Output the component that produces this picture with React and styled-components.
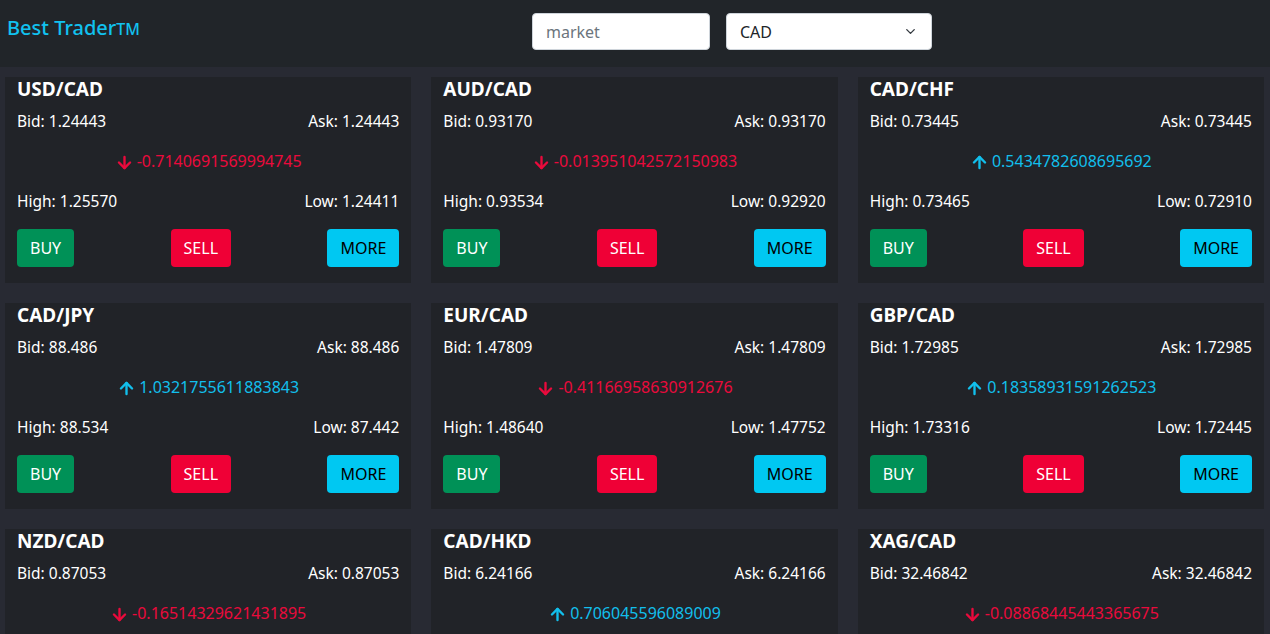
import React from "react";
import styled, { createGlobalStyle } from "styled-components";
import { ArrowDown, ArrowUp, ChevronDown } from "lucide-react";

const GlobalStyle = createGlobalStyle`
  html, body {
    margin: 0;
    padding: 0;
    background: #282a33;
    font-family: "Noto Sans", "Open Sans", sans-serif;
    color: #ffffff;
  }
  * { box-sizing: border-box; }
`;

const pairs = [
  { name: "USD/CAD", bid: "1.24443", ask: "1.24443", change: "-0.7140691569994745", high: "1.25570", low: "1.24411" },
  { name: "AUD/CAD", bid: "0.93170", ask: "0.93170", change: "-0.013951042572150983", high: "0.93534", low: "0.92920" },
  { name: "CAD/CHF", bid: "0.73445", ask: "0.73445", change: "0.5434782608695692", high: "0.73465", low: "0.72910" },
  { name: "CAD/JPY", bid: "88.486", ask: "88.486", change: "1.0321755611883843", high: "88.534", low: "87.442" },
  { name: "EUR/CAD", bid: "1.47809", ask: "1.47809", change: "-0.41166958630912676", high: "1.48640", low: "1.47752" },
  { name: "GBP/CAD", bid: "1.72985", ask: "1.72985", change: "0.18358931591262523", high: "1.73316", low: "1.72445" },
  { name: "NZD/CAD", bid: "0.87053", ask: "0.87053", change: "-0.16514329621431895", high: "0.87412", low: "0.86950" },
  { name: "CAD/HKD", bid: "6.24166", ask: "6.24166", change: "0.706045596089009", high: "6.24980", low: "6.19720" },
  { name: "XAG/CAD", bid: "32.46842", ask: "32.46842", change: "-0.08868445443365675", high: "32.91050", low: "32.40115" },
];

function App() {
  return (
    <>
      <GlobalStyle />
      <Header>
        <Logo>
          Best Trader<Tm>TM</Tm>
        </Logo>
        <SearchInput placeholder="market" />
        <SelectWrap>
          <Select defaultValue="CAD">
            <option>CAD</option>
            <option>USD</option>
            <option>EUR</option>
          </Select>
          <Chevron>
            <ChevronDown size={15} strokeWidth={2.2} />
          </Chevron>
        </SelectWrap>
      </Header>
      <Board>
        {pairs.map((p) => {
          const down = p.change.startsWith("-");
          return (
            <Card key={p.name}>
              <Title>{p.name}</Title>
              <Row>
                <span>Bid: {p.bid}</span>
                <span>Ask: {p.ask}</span>
              </Row>
              <Change $down={down}>
                {down ? <ArrowDown size={19} strokeWidth={3} /> : <ArrowUp size={19} strokeWidth={3} />}
                {p.change}
              </Change>
              <Row>
                <span>High: {p.high}</span>
                <span>Low: {p.low}</span>
              </Row>
              <Actions>
                <Button $kind="buy">BUY</Button>
                <Button $kind="sell">SELL</Button>
                <Button $kind="more">MORE</Button>
              </Actions>
            </Card>
          );
        })}
      </Board>
    </>
  );
}

const Header = styled.header`
  height: 67px;
  background: #212529;
  display: grid;
  grid-template-columns: 509px 178px 206px;
  column-gap: 16px;
  padding: 13px 0 0 7px;
  align-items: start;
`;

const Logo = styled.div`
  color: #11c2ef;
  font-size: 20px;
  font-weight: 500;
  line-height: 30px;
`;

const Tm = styled.span`
  font-size: 16px;
`;

const SearchInput = styled.input`
  height: 37px;
  width: 178px;
  border: 1px solid #ced4da;
  border-radius: 4px;
  padding: 0 13px;
  font-family: inherit;
  font-size: 16px;
  color: #212529;
  background: #fff;
  outline: none;
  &::placeholder { color: #6c757d; }
`;

const SelectWrap = styled.div`
  position: relative;
  width: 206px;
  height: 37px;
`;

const Select = styled.select`
  appearance: none;
  width: 100%;
  height: 100%;
  border: 1px solid #ced4da;
  border-radius: 4px;
  padding: 0 13px;
  font-family: inherit;
  font-size: 16px;
  color: #212529;
  background: #fff;
  outline: none;
`;

const Chevron = styled.span`
  position: absolute;
  right: 14px;
  top: 11px;
  color: #343a40;
  pointer-events: none;
  display: flex;
`;

const Board = styled.main`
  display: grid;
  grid-template-columns: repeat(3, 1fr);
  gap: 20px;
  padding: 10px 6px 20px 5px;
`;

const Card = styled.section`
  background: #212328;
  padding: 0 12px 16px;
  display: flex;
  flex-direction: column;
`;

const Title = styled.h4`
  margin: 0;
  font-size: 19px;
  font-weight: 700;
  line-height: 24px;
`;

const Row = styled.div`
  display: flex;
  justify-content: space-between;
  font-size: 15.5px;
  line-height: 24px;
  margin-top: 8px;
  & + div { margin-top: 16px; }
`;

const Change = styled.div`
  display: flex;
  align-items: center;
  justify-content: center;
  gap: 3px;
  margin-top: 16px;
  font-size: 16px;
  line-height: 24px;
  color: ${(p) => (p.$down ? "#ea0a3c" : "#12bfec")};
  svg { margin-top: 3px; }
  & + div { margin-top: 16px; }
`;

const Actions = styled.div`
  display: flex;
  justify-content: space-between;
  margin-top: 16px;
`;

const buttonColors = {
  buy: { bg: "#009157", fg: "#ffffff" },
  sell: { bg: "#ef0036", fg: "#ffffff" },
  more: { bg: "#00c8f2", fg: "#000000" },
};

const Button = styled.button`
  height: 38px;
  padding: 0 13px;
  border: none;
  border-radius: 4px;
  font-family: inherit;
  font-size: 16px;
  background: ${(p) => buttonColors[p.$kind].bg};
  color: ${(p) => buttonColors[p.$kind].fg};
  cursor: pointer;
`;

export default App;
